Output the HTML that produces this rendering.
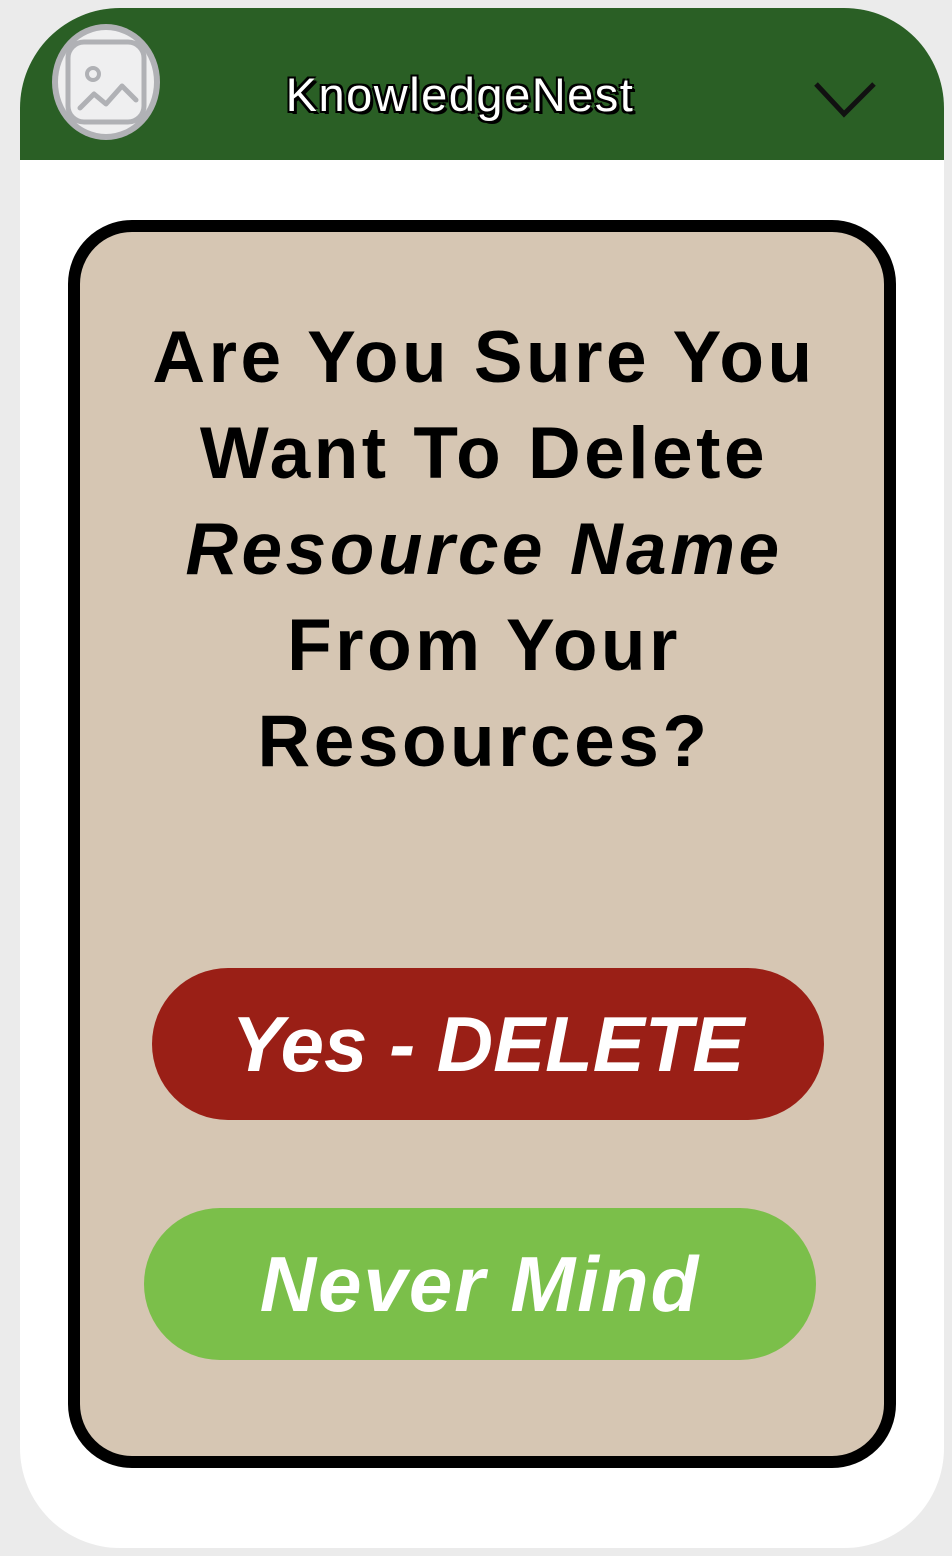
<!DOCTYPE html>
<html><head><style>
body{margin:0;width:952px;height:1556px;background:#ebebeb;font-family:"Liberation Sans",sans-serif;position:relative;overflow:hidden}
.card{position:absolute;left:20px;top:8px;width:924px;height:1540px;background:#fff;border-radius:100px}
.hdr{position:absolute;left:20px;top:8px;width:924px;height:152px;background:#2a5f25;border-radius:100px 100px 0 0}
.title{position:absolute;left:0;width:920px;top:67px;text-align:center;font-size:47px;color:#fff;text-shadow:2px 2px 0 #000,-2px -2px 0 #000,2px -2px 0 #000,-2px 2px 0 #000,3px 3px 0 #000;letter-spacing:1.5px}
.dlg{position:absolute;left:68px;top:220px;width:804px;height:1224px;border:12px solid #000;border-radius:64px;background:#d6c6b3}
.q{position:absolute;left:68px;width:832px;top:310px;text-align:center;font-size:73px;font-weight:bold;line-height:96px;color:#000;letter-spacing:3.5px}
.btn{position:absolute;width:672px;height:152px;border-radius:76px;color:#fff;font-weight:bold;font-style:italic;font-size:78px;text-align:center;line-height:152px}
</style></head><body>
<div class="card"></div>
<div class="hdr"></div>
<svg style="position:absolute;left:50px;top:22px" width="112" height="120" viewBox="0 0 112 120">
<ellipse cx="56" cy="60" rx="54" ry="58" fill="#b0b1b5"/>
<ellipse cx="56" cy="60" rx="48" ry="52" fill="#efeff0"/>
<rect x="18" y="20" width="76" height="80" rx="16" fill="none" stroke="#b0b1b5" stroke-width="5"/>
<circle cx="43" cy="52" r="6" fill="none" stroke="#b0b1b5" stroke-width="4"/>
<path d="M30 86 L44 72 L56 82 L72 64 L86 78" fill="none" stroke="#b0b1b5" stroke-width="5" stroke-linecap="round" stroke-linejoin="round"/>
</svg>
<div class="title">KnowledgeNest</div>
<svg style="position:absolute;left:812px;top:80px" width="66" height="40"><path d="M4 4 L32 34 L62 4" fill="none" stroke="#111" stroke-width="5"/></svg>
<div class="dlg"></div>
<div class="q">Are You Sure You<br>Want To Delete<br><i>Resource Name</i><br>From Your<br>Resources?</div>
<div class="btn" style="left:152px;top:968px;background:#9a1f16">Yes - DELETE</div>
<div class="btn" style="left:144px;top:1208px;background:#7bbf4a;letter-spacing:2px">Never Mind</div>
</body></html>
